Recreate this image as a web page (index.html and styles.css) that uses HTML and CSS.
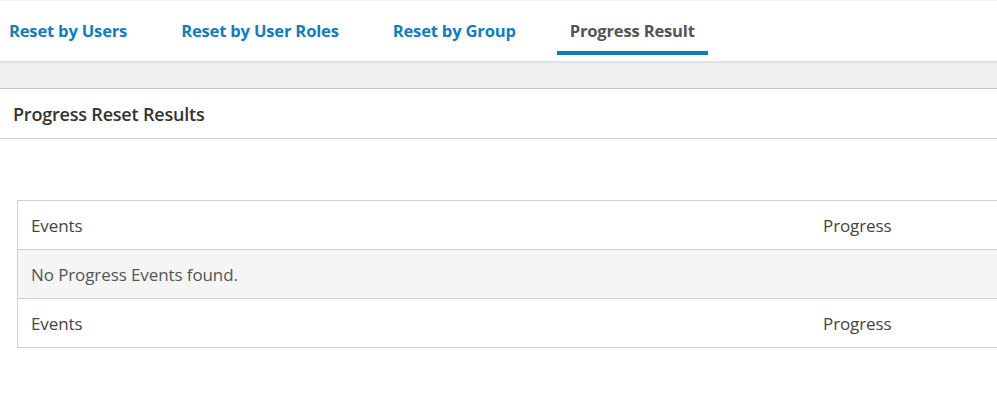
FILE: index.html
```html
<!DOCTYPE html>
<html>
<head>
<meta charset="utf-8">
<link rel="stylesheet" href="styles.css">
</head>
<body>
<div class="page">
  <nav class="tabs">
    <ul class="tab-list">
      <li class="tab">Reset by Users</li>
      <li class="tab">Reset by User Roles</li>
      <li class="tab">Reset by Group</li>
      <li class="tab active">Progress Result</li>
    </ul>
  </nav>
  <div class="strip"></div>
  <div class="section-header">Progress Reset Results</div>
  <div class="content">
    <table class="results">
      <thead>
        <tr><th class="col-events">Events</th><th class="col-progress">Progress</th></tr>
      </thead>
      <tbody>
        <tr class="empty"><td colspan="2">No Progress Events found.</td></tr>
      </tbody>
      <tfoot>
        <tr><td class="col-events">Events</td><td class="col-progress">Progress</td></tr>
      </tfoot>
    </table>
  </div>
</div>
</body>
</html>
```

FILE: styles.css
```css
html, body {
  margin: 0;
  padding: 0;
  background: #fff;
  overflow: hidden;
}
body {
  font-family: "Open Sans", "Noto Sans", sans-serif;
  color: #444;
}
.page {
  width: 997px;
}
.tabs {
  border-top: 1px solid #f2f2f2;
  border-bottom: 1px solid #e0e0e0;
  box-shadow: 0 1px 2px rgba(0,0,0,0.06);
  height: 62px;
  box-sizing: border-box;
  position: relative;
}
.tab-list {
  list-style: none;
  margin: 0 0 0 -4px;
  padding: 0;
  display: flex;
  gap: 28px;
}
.tab {
  height: 54px;
  box-sizing: border-box;
  padding: 9px 13px 0;
  display: flex;
  align-items: center;
  font-size: 16.6px;
  font-weight: 700;
  color: #0f7dbf;
  letter-spacing: -0.2px;
  border-bottom: 4px solid transparent;
}
.tab.active {
  color: #555;
  border-bottom-color: #0a7fbd;
}
.strip {
  height: 26px;
  background: #efefef;
  border-bottom: 1px solid #c9c9c9;
}
.section-header {
  height: 50px;
  box-sizing: border-box;
  display: flex;
  align-items: center;
  padding-left: 13px;
  font-size: 18px;
  font-weight: 600;
  color: #333;
  border-bottom: 1px solid #cfcfcf;
  letter-spacing: -0.2px;
}
.content {
  padding: 61px 0 0 17px;
}
.results {
  width: 1000px;
  border-collapse: collapse;
  border: 1px solid #d0d0d0;
  font-size: 17px;
  color: #444;
}
.results th,
.results td {
  height: 48px;
  padding: 0 13px;
  text-align: left;
  font-weight: 400;
  border-top: 1px solid #d0d0d0;
  letter-spacing: -0.1px;
}
.results .col-progress {
  width: 180px;
}
.results .empty td {
  background: #f4f6f6;
  color: #555;
}
```
